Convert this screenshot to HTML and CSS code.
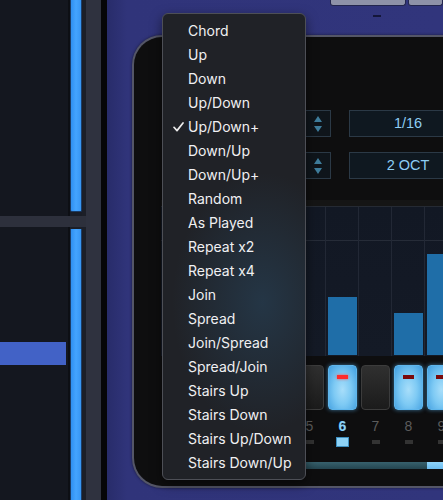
FILE: index.html
```html
<!DOCTYPE html>
<html>
<head>
<meta charset="utf-8">
<link rel="stylesheet" href="styles.css">
</head>
<body>
<div class="app">
  <div class="left">
    <div class="track track-top">
      <div class="lane"></div>
      <div class="meter meter-top"></div>
      <div class="gap"></div>
    </div>
    <div class="divider"></div>
    <div class="track track-bottom">
      <div class="lane lane-bottom"><div class="region"></div></div>
      <div class="meter"></div>
      <div class="gap"></div>
    </div>
  </div>
  <div class="rail"></div>
  <div class="blackstrip"></div>
  <div class="main">
    <div class="topbar">
      <div class="topbtns">
        <div class="topbtn wide"></div>
        <div class="topbtn"></div>
      </div>
      <div class="dash"></div>
    </div>
    <div class="panel">
      <div class="params">
        <div class="param">
          <div class="stepper"><div class="arrows"><span class="up"></span><span class="down"></span></div></div>
          <div class="value">1/16</div>
        </div>
        <div class="param">
          <div class="stepper"><div class="arrows"><span class="up"></span><span class="down"></span></div></div>
          <div class="value">2 OCT</div>
        </div>
      </div>
      <div class="grid">
        <div class="hline"></div>
        <div class="col"></div>
        <div class="col"></div>
        <div class="col"></div>
        <div class="col"></div>
        <div class="col"></div>
        <div class="col"><div class="bar" style="height:58px"></div></div>
        <div class="col"></div>
        <div class="col"><div class="bar" style="height:42px"></div></div>
        <div class="col"><div class="bar" style="height:101px"></div></div>
        <div class="col"></div>
      </div>
      <div class="steps">
        <div class="stepcell"><div class="step"></div></div>
        <div class="stepcell"><div class="step"></div></div>
        <div class="stepcell"><div class="step"></div></div>
        <div class="stepcell"><div class="step"></div></div>
        <div class="stepcell"><div class="step"></div></div>
        <div class="stepcell"><div class="step on"><span class="led bright"></span></div></div>
        <div class="stepcell"><div class="step"></div></div>
        <div class="stepcell"><div class="step on"><span class="led"></span></div></div>
        <div class="stepcell"><div class="step on"><span class="led"></span></div></div>
        <div class="stepcell"><div class="step"></div></div>
      </div>
      <div class="nums">
        <span></span><span></span><span></span><span></span><span>5</span><span class="cur">6</span><span>7</span><span>8</span><span>9</span>
      </div>
      <div class="inds">
        <span></span><span></span><span></span><span></span><span></span><span class="curind"></span><span></span><span></span><span></span><span></span>
      </div>
      <div class="slider"><div class="fill"></div></div>
    </div>
  </div>
</div>

<div class="menu">
  <div class="item"><span class="chk"></span>Chord</div>
  <div class="item"><span class="chk"></span>Up</div>
  <div class="item"><span class="chk"></span>Down</div>
  <div class="item"><span class="chk"></span>Up/Down</div>
  <div class="item"><span class="chk"><svg width="11" height="10" viewBox="0 0 11 10"><path d="M1 5.3 L4 8.6 L10 1" fill="none" stroke="#ececec" stroke-width="1.7" stroke-linecap="round" stroke-linejoin="round"/></svg></span>Up/Down+</div>
  <div class="item"><span class="chk"></span>Down/Up</div>
  <div class="item"><span class="chk"></span>Down/Up+</div>
  <div class="item"><span class="chk"></span>Random</div>
  <div class="item"><span class="chk"></span>As Played</div>
  <div class="item"><span class="chk"></span>Repeat x2</div>
  <div class="item"><span class="chk"></span>Repeat x4</div>
  <div class="item"><span class="chk"></span>Join</div>
  <div class="item"><span class="chk"></span>Spread</div>
  <div class="item"><span class="chk"></span>Join/Spread</div>
  <div class="item"><span class="chk"></span>Spread/Join</div>
  <div class="item"><span class="chk"></span>Stairs Up</div>
  <div class="item"><span class="chk"></span>Stairs Down</div>
  <div class="item"><span class="chk"></span>Stairs Up/Down</div>
  <div class="item"><span class="chk"></span>Stairs Down/Up</div>
</div>
</body>
</html>
```
FILE: styles.css
```css
* { box-sizing: border-box; }
html, body {
  margin: 0;
  padding: 0;
  width: 443px;
  height: 500px;
  overflow: hidden;
  background: #14171f;
  font-family: "Liberation Sans", Arial, sans-serif;
}
.app {
  display: flex;
  width: 443px;
  height: 500px;
}
.left {
  width: 86px;
  flex-shrink: 0;
  display: flex;
  flex-direction: column;
}
.track {
  display: flex;
}
.track-top { height: 216px; background: #1a1d26; }
.track-bottom { flex: 1; padding-top: 2px; background: #1c1f28; }
.lane {
  width: 70px;
  background: #14171f;
  border-right: 2px solid #0d0f14;
  position: relative;
}
.lane-bottom { margin-top: -2px; }
.region {
  position: absolute;
  left: 0;
  top: 115px;
  width: 66px;
  height: 23px;
  background: #4262c6;
}
.meter {
  width: 12px;
  background: linear-gradient(90deg, #2f8ff0, #44a4ff 50%, #3795f2);
  border-left: 1px solid #1b3c66;
  border-right: 1px solid #1b3c66;
}
.meter-top {
  height: 212px;
  border-radius: 0 0 2px 2px;
  border-bottom: 1px solid #1b3c66;
}
.gap { width: 4px; background: #1c1f28; }
.divider {
  height: 11px;
  background: #2d303c;
}
.rail {
  width: 15px;
  flex-shrink: 0;
  background: #2f323f;
}
.blackstrip {
  width: 6px;
  flex-shrink: 0;
  background: #060608;
}
.main {
  flex: 1;
  overflow: hidden;
  background: linear-gradient(90deg, #282c6a 0, #30347a 20px, #31357c 100%);
}
.topbar {
  height: 35px;
  padding-left: 223px;
}
.topbtns {
  display: flex;
  gap: 2px;
}
.topbtn {
  width: 40px;
  height: 6px;
  background: #8e92a8;
  border: 1px solid #23264e;
  border-top: none;
  border-radius: 0 0 3px 3px;
}
.topbtn.wide { width: 88px; }
.dash {
  width: 8px;
  height: 2px;
  margin: 9px 0 0 43px;
  background: #14163a;
}
.panel {
  width: 340px;
  height: 453px;
  margin-left: 25px;
  background: #0e0e0f;
  border: 2px solid #545667;
  border-right: none;
  border-radius: 30px 0 0 30px;
  padding-top: 73px;
  padding-left: 27px;
  box-shadow: 0 0 3px rgba(0,0,0,0.5);
}
.params {
  display: flex;
  flex-direction: column;
  gap: 15px;
}
.param {
  display: flex;
  gap: 18px;
  height: 27px;
  padding-left: 100px;
}
.stepper {
  width: 70px;
  height: 27px;
  border: 1px solid #2b3946;
  background: #0f151b;
  display: flex;
  justify-content: flex-end;
}
.arrows {
  width: 18px;
  display: flex;
  flex-direction: column;
  align-items: center;
  justify-content: center;
  gap: 4px;
  margin-right: 3px;
}
.up {
  width: 0; height: 0;
  border-left: 4px solid transparent;
  border-right: 4px solid transparent;
  border-bottom: 6px solid #3f7d9c;
}
.down {
  width: 0; height: 0;
  border-left: 4px solid transparent;
  border-right: 4px solid transparent;
  border-top: 6px solid #3f7d9c;
}
.value {
  width: 118px;
  height: 27px;
  border: 1px solid #2b3946;
  background: #0f1820;
  color: #8dcdf3;
  font-size: 14.5px;
  line-height: 25px;
  text-align: center;
}
.grid {
  margin-top: 27px;
  height: 150px;
  display: flex;
  position: relative;
  background: linear-gradient(180deg, #121824, #141a26);
  border-top: 1px solid #252a33;
  box-shadow: 0 -6px 0 #151515;
}
.hline {
  position: absolute;
  left: 0;
  right: 0;
  top: 33px;
  height: 1px;
  background: #262c38;
}
.col {
  width: 33px;
  flex-shrink: 0;
  border-right: 1px solid #222835;
  display: flex;
  align-items: flex-end;
  padding-left: 2px;
  padding-bottom: 1px;
  position: relative;
}
.bar {
  width: 29px;
  background: #1f6ea8;
}
.steps {
  margin-top: 9px;
  display: flex;
  height: 45px;
}
.stepcell {
  width: 33px;
  flex-shrink: 0;
  padding-left: 2px;
}
.step {
  width: 29px;
  height: 45px;
  border-radius: 4px;
  background: linear-gradient(180deg, #303030, #1b1b1b);
  border: 1px solid #3c3c3c;
  display: flex;
  justify-content: center;
}
.step.on {
  background: radial-gradient(ellipse at 50% 55%, #a8defa 0, #7ecaf4 45%, #3f9ee0 100%);
  border: 1px solid #5fb6ec;
  box-shadow: 0 0 4px rgba(90,180,240,0.6);
}
.led {
  width: 11px;
  height: 4px;
  margin-top: 9px;
  background: #7a0a0c;
}
.led.bright { background: #ff2b2b; box-shadow: 0 0 3px #ff5050; }
.nums {
  margin-top: 8px;
  display: flex;
  height: 16px;
}
.nums span {
  width: 33px;
  flex-shrink: 0;
  text-align: center;
  font-size: 14px;
  line-height: 16px;
  color: #5c5c5c;
}
.nums .cur {
  color: #8dd2f6;
  font-weight: bold;
  text-shadow: 0 0 1px #0a3050, 0 0 1px #0a3050;
}
.inds {
  margin-top: 6px;
  display: flex;
  height: 4px;
  align-items: center;
}
.inds span {
  width: 33px;
  flex-shrink: 0;
  display: flex;
  justify-content: center;
}
.inds span::before {
  content: "";
  width: 8px;
  height: 4px;
  background: #333333;
}
.inds .curind::before {
  width: 11px;
  height: 8px;
  background: #8dd2f6;
  border: 1px solid #3d8fc0;
}
.slider {
  margin-top: 18px;
  height: 7px;
  margin-left: 120px;
  background: linear-gradient(180deg, #37616d, #244550);
  display: flex;
  justify-content: flex-end;
  border-radius: 3px 0 0 3px;
}
.fill {
  width: 45px;
  background: linear-gradient(180deg, #8fd4fa, #6bbcf0);
}
.menu {
  position: absolute;
  left: 162px;
  top: 13px;
  width: 144px;
  height: 467px;
  padding-top: 5px;
  border: 1px solid #4d4f56;
  border-radius: 6px;
  background:
    radial-gradient(ellipse 90px 130px at 70% 62%, rgba(40,70,95,0.55), rgba(40,70,95,0) 100%),
    #202227;
  box-shadow: 0 4px 12px rgba(0,0,0,0.5);
  font-family: Inter, "Noto Sans", sans-serif;
  color: #f0f0f2;
  font-size: 14px;
}
.item {
  height: 24px;
  line-height: 24px;
  display: flex;
  align-items: center;
  white-space: nowrap;
}
.chk {
  width: 25px;
  flex-shrink: 0;
  padding-left: 10px;
  display: flex;
  align-items: center;
}
```
